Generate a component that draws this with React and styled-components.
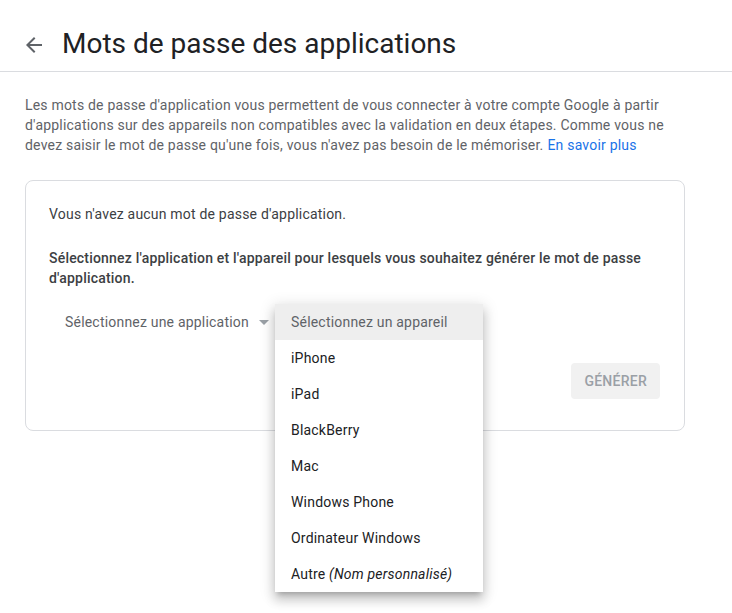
import React from "react";
import styled, { createGlobalStyle } from "styled-components";

const Global = createGlobalStyle`
  html, body { margin: 0; padding: 0; background: #fff; }
  html, body, #root { min-height: 100vh; }
  body { font-family: Roboto, "Liberation Sans", Arial, sans-serif; color: #202124; }
  * { box-sizing: border-box; }
`;

const Header = styled.header`
  display: flex;
  align-items: center;
  height: 72px;
  padding: 16px 0 0 22px;
  border-bottom: 1px solid #dadce0;
`;

const BackButton = styled.button`
  display: flex;
  align-items: center;
  justify-content: center;
  width: 24px;
  height: 24px;
  padding: 0;
  margin: 2px 16px 0 0;
  border: 0;
  background: none;
  color: #5f6368;
  cursor: pointer;
`;

const Title = styled.h1`
  margin: 0;
  font-family: Roboto, "Liberation Sans", sans-serif;
  font-weight: 400;
  font-size: 28px;
  line-height: 36px;
  color: #202124;
`;

const Main = styled.main`
  padding: 23px 25px 0 25px;
  width: 710px;
  letter-spacing: 0.2px;
`;

const Intro = styled.p`
  margin: 0;
  font-size: 14px;
  line-height: 20px;
  color: #5f6368;
`;

const Link = styled.a`
  margin-left: 4px;
  color: #1a73e8;
  text-decoration: none;
`;

const Card = styled.section`
  margin-top: 25px;
  width: 660px;
  border: 1px solid #dadce0;
  border-radius: 8px;
  padding: 23px 24px 31px 23px;
`;

const Text = styled.p`
  margin: 0;
  font-size: 14px;
  line-height: 20px;
  font-weight: ${(p) => (p.$strong ? 500 : 400)};
  color: #3c4043;
  & + & { margin-top: 24px; }
`;

const SelectRow = styled.div`
  display: flex;
  align-items: stretch;
  margin-top: 16px;
  height: 36px;
`;

const AppSelect = styled.div`
  display: flex;
  align-items: center;
  width: 226px;
  padding-left: 16px;
  font-size: 14px;
  color: #5f6368;
`;

const Caret = styled.span`
  margin-left: 10px;
  width: 0;
  height: 0;
  border-left: 5.5px solid transparent;
  border-right: 5.5px solid transparent;
  border-top: 5px solid #9aa0a6;
`;

const DeviceSelect = styled.div`
  position: relative;
  width: 208px;
`;

const Menu = styled.ul`
  position: absolute;
  top: 0;
  left: 0;
  width: 208px;
  margin: 0;
  padding: 0;
  list-style: none;
  background: #fff;
  z-index: 2;
  box-shadow: 0 5px 5px -3px rgba(0, 0, 0, 0.2), 0 8px 10px 1px rgba(0, 0, 0, 0.14),
    0 3px 14px 2px rgba(0, 0, 0, 0.12);
`;

const Option = styled.li`
  display: flex;
  align-items: center;
  height: 36px;
  padding: 0 16px;
  font-size: 14px;
  white-space: nowrap;
  color: ${(p) => (p.$placeholder ? "#5f6368" : "#202124")};
  background: ${(p) => (p.$placeholder ? "#eeeeee" : "#fff")};
`;

const Actions = styled.div`
  display: flex;
  justify-content: flex-end;
  margin-top: 23px;
`;

const GenerateButton = styled.button`
  height: 36px;
  padding: 0 13px;
  border: 0;
  border-radius: 4px;
  background: #f1f1f1;
  color: #9aa0a6;
  font-family: Roboto, "Liberation Sans", sans-serif;
  font-size: 14px;
  font-weight: 500;
  letter-spacing: 0.25px;
  text-transform: uppercase;
`;

const ArrowBack = () => (
  <svg width="24" height="24" viewBox="0 0 24 24" fill="currentColor" aria-hidden="true">
    <path d="M20 11H7.83l5.59-5.59L12 4l-8 8 8 8 1.41-1.41L7.83 13H20v-2z" />
  </svg>
);

const devices = [
  "iPhone",
  "iPad",
  "BlackBerry",
  "Mac",
  "Windows Phone",
  "Ordinateur Windows",
];

export default function App() {
  return (
    <>
      <Global />
      <Header>
        <BackButton aria-label="Retour">
          <ArrowBack />
        </BackButton>
        <Title>Mots de passe des applications</Title>
      </Header>
      <Main>
        <Intro>
          Les mots de passe d'application vous permettent de vous connecter à votre compte Google à partir
          d'applications sur des appareils non compatibles avec la validation en deux étapes. Comme vous ne
          devez saisir le mot de passe qu'une fois, vous n'avez pas besoin de le mémoriser.
          <Link href="#">En savoir plus</Link>
        </Intro>
        <Card>
          <Text>Vous n'avez aucun mot de passe d'application.</Text>
          <Text $strong>
            Sélectionnez l'application et l'appareil pour lesquels vous souhaitez générer le mot de passe
            d'application.
          </Text>
          <SelectRow>
            <AppSelect>
              Sélectionnez une application
              <Caret />
            </AppSelect>
            <DeviceSelect>
              <Menu>
                <Option $placeholder>Sélectionnez un appareil</Option>
                {devices.map((d) => (
                  <Option key={d}>{d}</Option>
                ))}
                <Option>
                  Autre&nbsp;<i>(Nom personnalisé)</i>
                </Option>
              </Menu>
            </DeviceSelect>
          </SelectRow>
          <Actions>
            <GenerateButton>Générer</GenerateButton>
          </Actions>
        </Card>
      </Main>
    </>
  );
}
